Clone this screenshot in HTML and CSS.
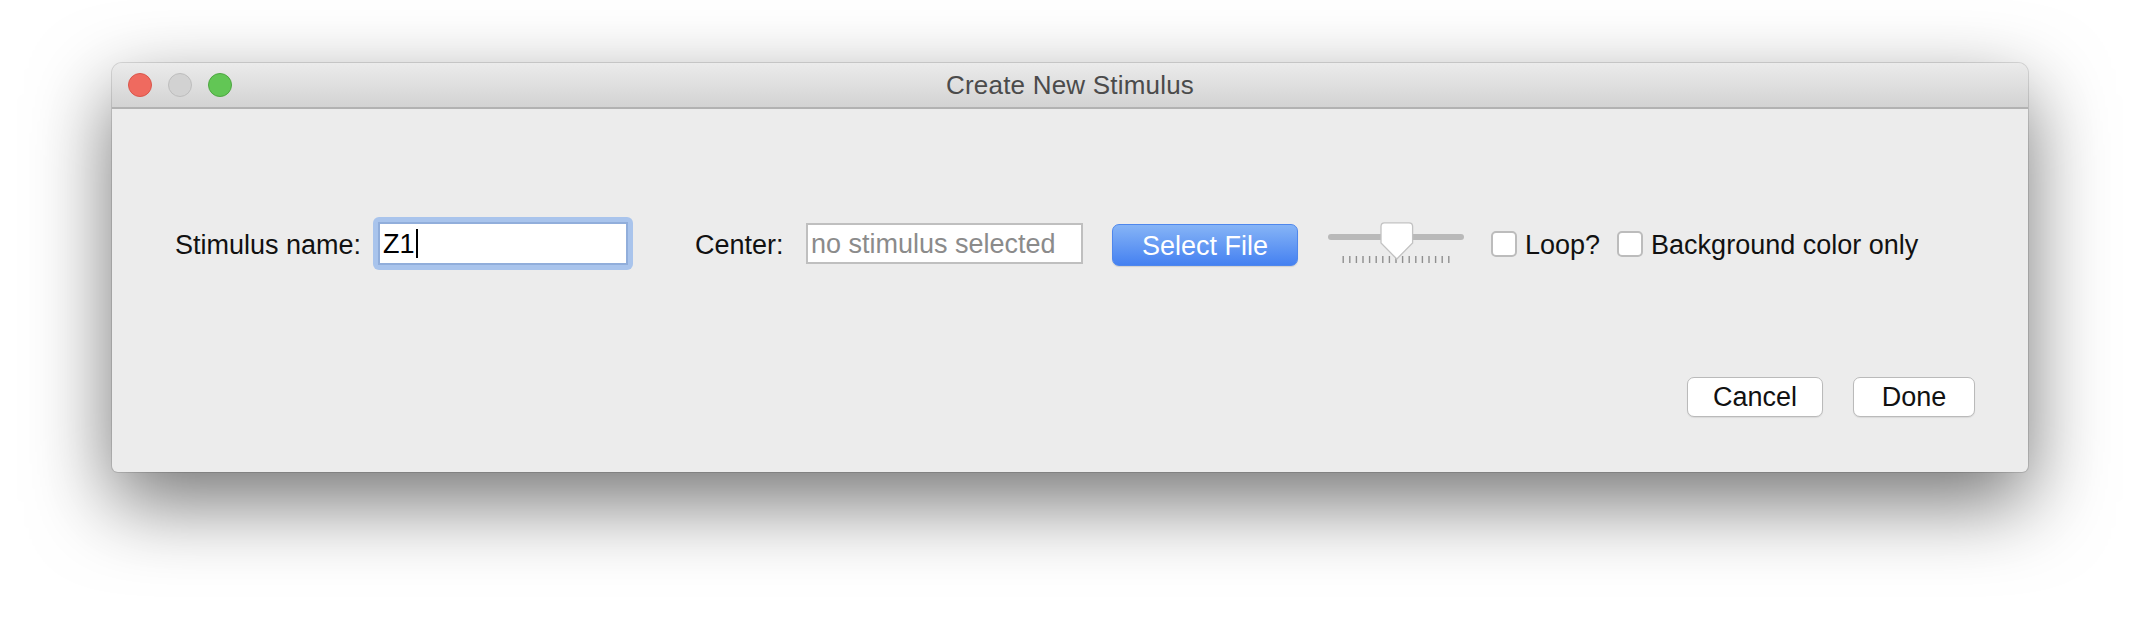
FILE: index.html
```html
<!DOCTYPE html>
<html>
<head>
<meta charset="utf-8">
<title>Create New Stimulus</title>
<link rel="stylesheet" href="styles.css">
</head>
<body>
<div class="page">
  <div class="window">
    <div class="titlebar">
      <div class="lights">
        <span class="light light-close"></span>
        <span class="light light-min"></span>
        <span class="light light-zoom"></span>
      </div>
      <div class="title">Create New Stimulus</div>
      <div class="spacer"></div>
    </div>
    <div class="content">
      <div class="form-row">
        <span class="label label-name">Stimulus name:</span>
        <div class="focus-ring">
          <div class="input input-name"><span class="value">Z1</span><span class="caret"></span></div>
        </div>
        <span class="label label-center">Center:</span>
        <div class="input input-center"><span class="placeholder">no stimulus selected</span></div>
        <button class="btn-primary">Select File</button>
        <svg class="slider" width="136" height="42" viewBox="0 0 136 42">
          <rect x="0" y="12" width="136" height="6" rx="3" fill="#b9b9b9"/>
          <g fill="#8f8f8f">
            <rect x="14.5" y="34" width="1.4" height="7"/>
            <rect x="21.1" y="34" width="1.4" height="7"/>
            <rect x="27.7" y="34" width="1.4" height="7"/>
            <rect x="34.3" y="34" width="1.4" height="7"/>
            <rect x="40.9" y="34" width="1.4" height="7"/>
            <rect x="47.5" y="34" width="1.4" height="7"/>
            <rect x="54.1" y="34" width="1.4" height="7"/>
            <rect x="60.7" y="34" width="1.4" height="7"/>
            <rect x="67.3" y="34" width="1.4" height="7"/>
            <rect x="73.9" y="34" width="1.4" height="7"/>
            <rect x="80.5" y="34" width="1.4" height="7"/>
            <rect x="87.1" y="34" width="1.4" height="7"/>
            <rect x="93.7" y="34" width="1.4" height="7"/>
            <rect x="100.3" y="34" width="1.4" height="7"/>
            <rect x="106.9" y="34" width="1.4" height="7"/>
            <rect x="113.5" y="34" width="1.4" height="7"/>
            <rect x="120.1" y="34" width="1.4" height="7"/>
          </g>
          <path d="M56.5 0.8 H81 Q84.6 0.8 84.6 4.4 V21 L68.8 37 L53 21 V4.4 Q53 0.8 56.5 0.8 Z" fill="#ffffff" stroke="#c2c2c2" stroke-width="1.3"/>
        </svg>
        <div class="checks">
          <label class="check-item"><span class="checkbox"></span><span class="label">Loop?</span></label>
          <label class="check-item"><span class="checkbox"></span><span class="label">Background color only</span></label>
        </div>
      </div>
      <div class="actions">
        <button class="btn">Cancel</button>
        <button class="btn btn-done">Done</button>
      </div>
    </div>
  </div>
</div>
</body>
</html>
```

FILE: styles.css
```css
html, body {
  margin: 0;
  padding: 0;
  background: #ffffff;
}

body {
  width: 2140px;
  height: 632px;
  overflow: hidden;
  font-family: "Liberation Sans", Arial, sans-serif;
}

.page {
  padding: 63px 0 0 112px;
}

.window {
  width: 1916px;
  height: 409px;
  background: #ececec;
  border-radius: 10px 10px 6px 6px;
  box-shadow: 0 0 0 1px rgba(0, 0, 0, 0.12), 0 30px 80px rgba(0, 0, 0, 0.55);
  overflow: hidden;
  display: flex;
  flex-direction: column;
}

.titlebar {
  height: 44px;
  flex: 0 0 44px;
  background: linear-gradient(#ebebeb, #d3d3d3);
  border-bottom: 2px solid #b2b2b2;
  display: grid;
  grid-template-columns: 1fr auto 1fr;
  align-items: center;
}

.lights {
  display: flex;
  gap: 16px;
  padding-left: 16px;
}

.light {
  width: 22px;
  height: 22px;
  border-radius: 50%;
  display: block;
}

.light-close {
  background: #ef6a5f;
  border: 1px solid #d9564b;
}

.light-min {
  background: #d2d2d2;
  border: 1px solid #bdbdbd;
}

.light-zoom {
  background: #62c655;
  border: 1px solid #4ea641;
}

.title {
  font-size: 26px;
  color: #4b4b4b;
  letter-spacing: 0.2px;
}

.content {
  flex: 1;
  display: flex;
  flex-direction: column;
  padding: 107px 53px 0 63px;
}

.form-row {
  display: flex;
  align-items: center;
  height: 54px;
}

.label {
  font-size: 27px;
  color: #111111;
  padding-top: 4px;
  white-space: nowrap;
}

.label-name {
  flex: 0 0 198px;
}

.focus-ring {
  padding: 5px;
  background: #a9c4ec;
  border-radius: 6px;
  width: 250px;
}

.input {
  box-sizing: border-box;
  background: #ffffff;
  display: flex;
  align-items: center;
  font-size: 27px;
}

.input-name {
  height: 43px;
  border: 2px solid #91aedb;
  padding: 3px 0 0 3px;
}

.value {
  color: #000000;
}

.caret {
  width: 2px;
  height: 29px;
  background: #000000;
  margin-left: 1px;
  margin-top: -3px;
}

.label-center {
  margin-left: 62px;
  flex: 0 0 111px;
}

.input-center {
  width: 277px;
  height: 41px;
  border: 2px solid #bfbfbf;
  padding: 3px 0 0 3px;
}

.placeholder {
  color: #8b8b8b;
  white-space: nowrap;
}

.btn-primary {
  margin-left: 29px;
  width: 186px;
  height: 42px;
  margin-top: 4px;
  border: 1px solid #4f87ec;
  border-radius: 7px;
  background: linear-gradient(#86b4f6, #4581f1);
  color: #ffffff;
  font-family: "Liberation Sans", Arial, sans-serif;
  font-size: 27px;
  padding: 2px 0 0;
  box-shadow: 0 1px 1px rgba(0, 0, 0, 0.12);
}

.slider {
  display: block;
  margin-left: 30px;
  flex: 0 0 136px;
}

.checks {
  display: flex;
  align-items: center;
  gap: 17px;
  margin-left: 27px;
}

.check-item {
  display: flex;
  align-items: center;
  gap: 8px;
}

.checkbox {
  display: block;
  box-sizing: border-box;
  width: 26px;
  height: 26px;
  margin-top: 2px;
  background: #ffffff;
  border: 2px solid #bcbcbc;
  border-radius: 5px;
}

.actions {
  display: flex;
  justify-content: flex-end;
  gap: 30px;
  margin-top: 107px;
}

.btn {
  width: 136px;
  height: 40px;
  box-sizing: border-box;
  background: #ffffff;
  border: 1.5px solid #bababa;
  border-radius: 7px;
  box-shadow: 0 1px 1px rgba(0, 0, 0, 0.08);
  font-family: "Liberation Sans", Arial, sans-serif;
  font-size: 27px;
  color: #111111;
  padding: 0;
}

.btn-done {
  width: 122px;
}
```
